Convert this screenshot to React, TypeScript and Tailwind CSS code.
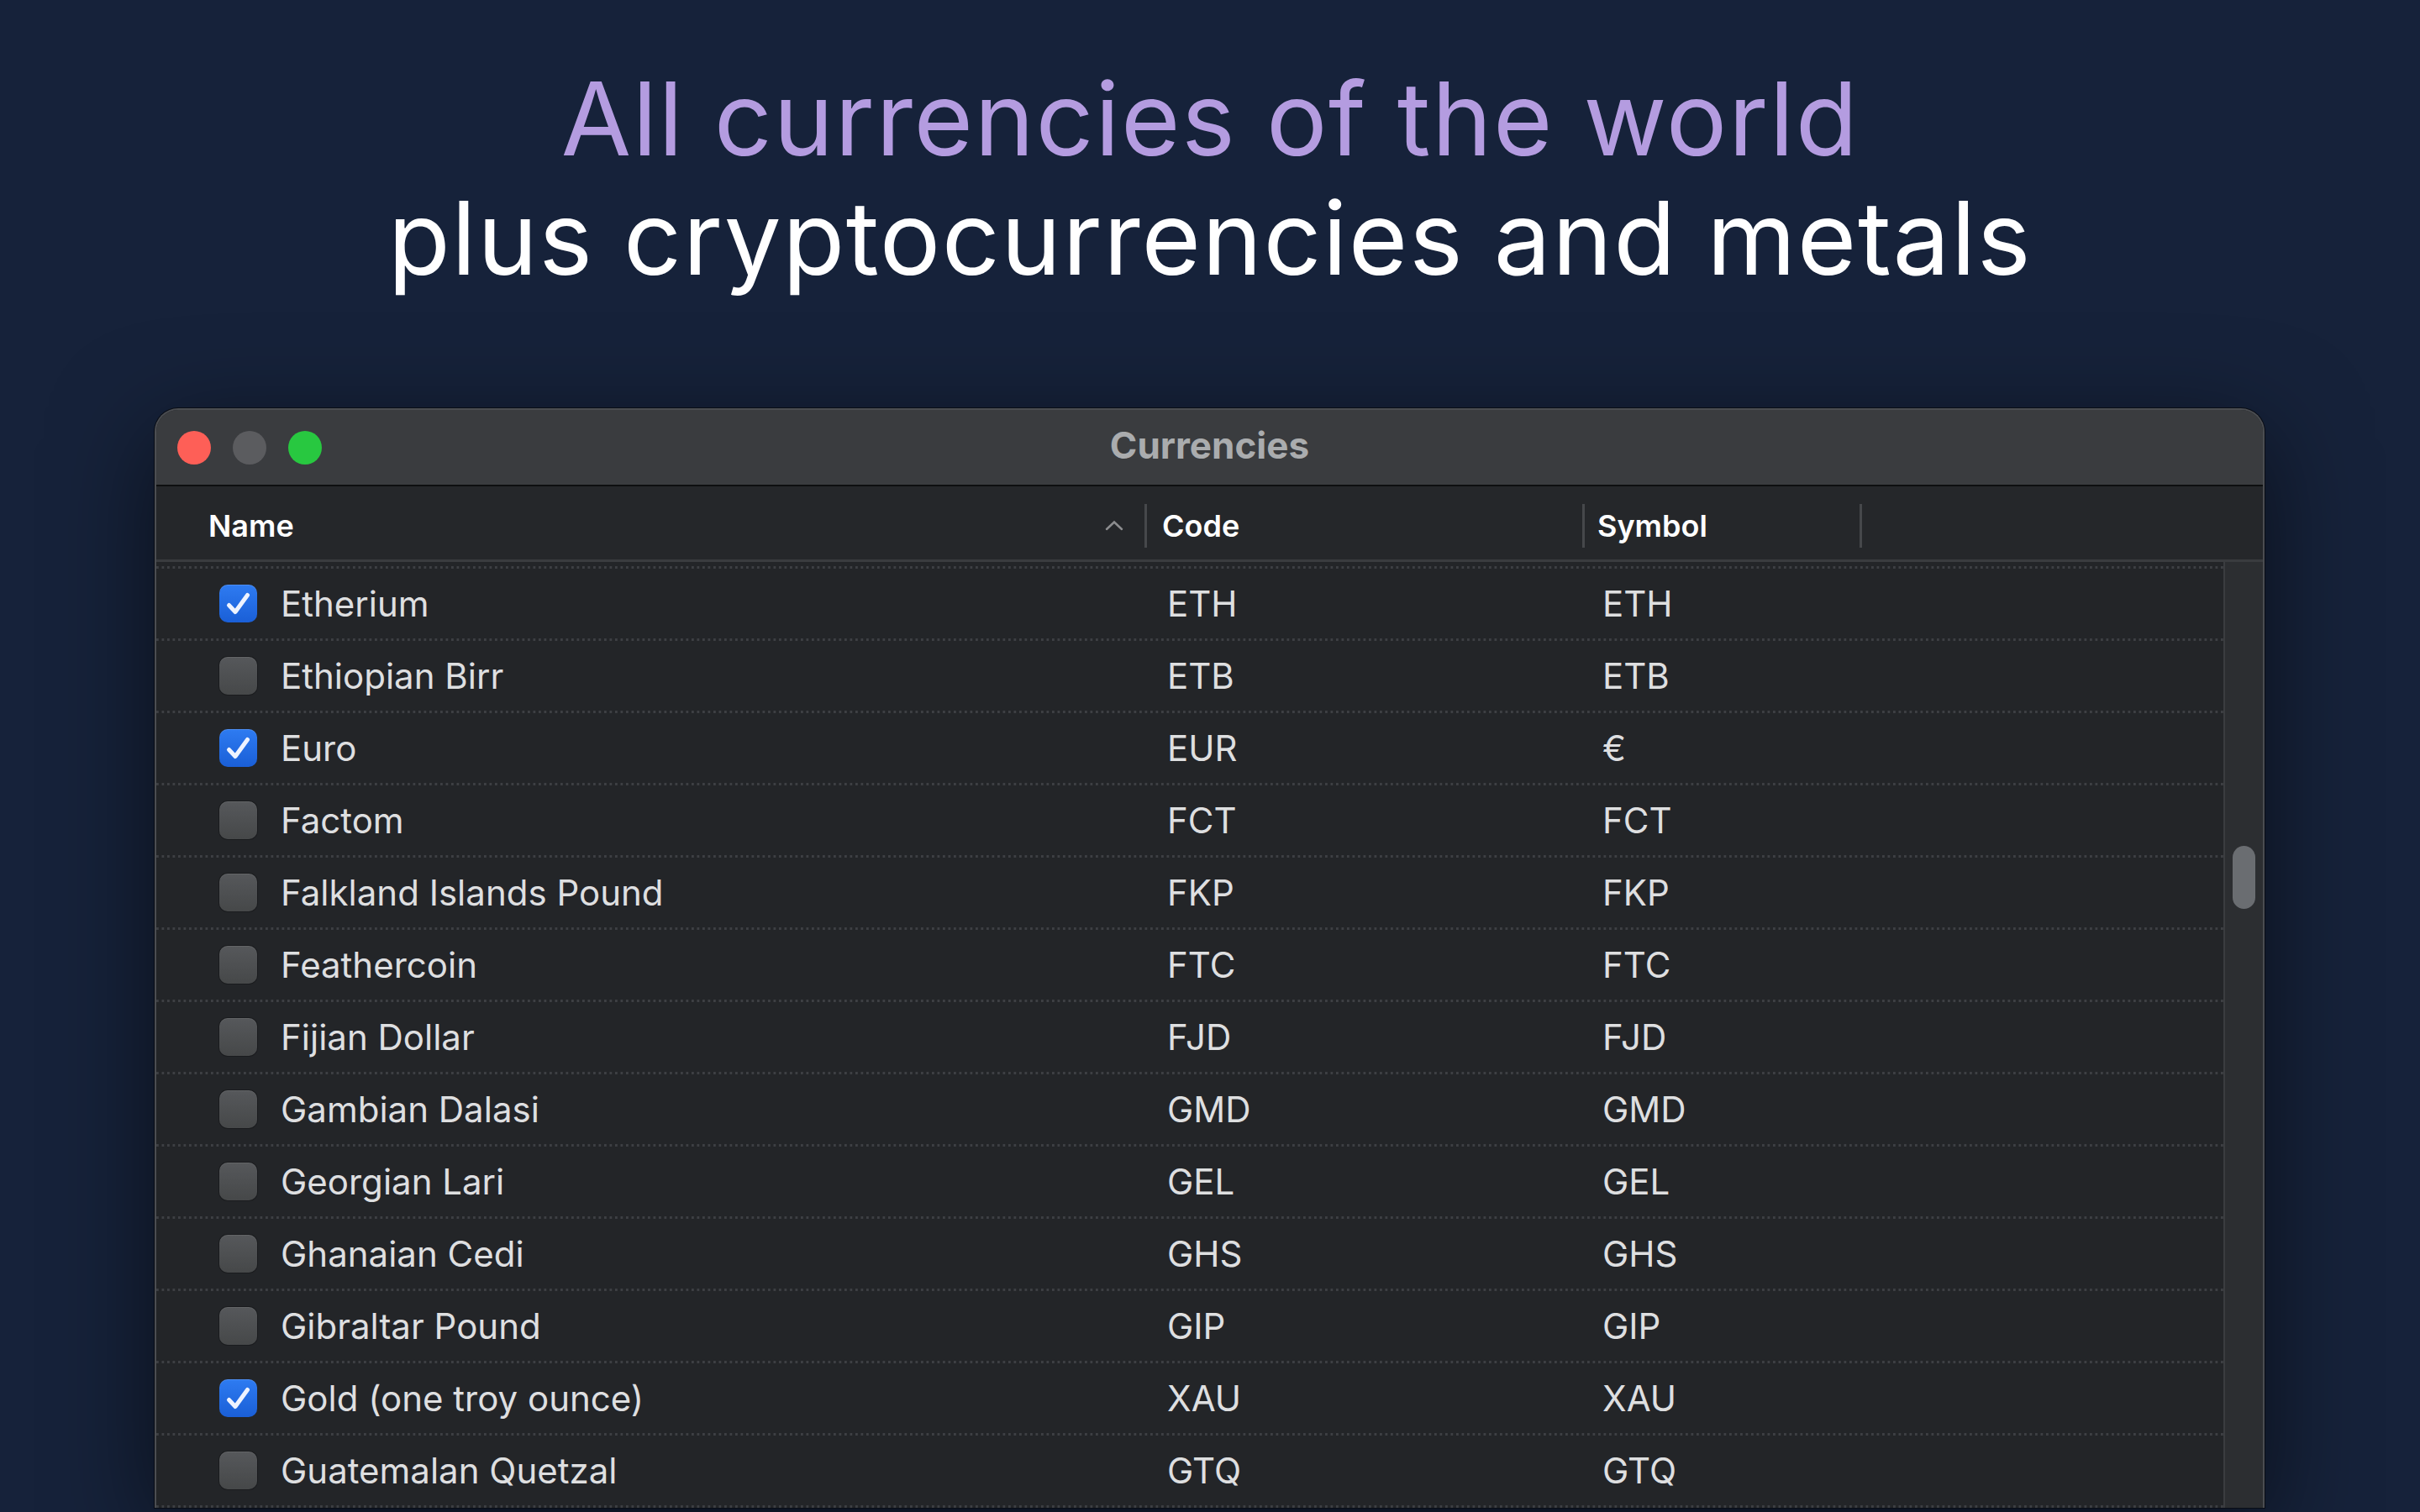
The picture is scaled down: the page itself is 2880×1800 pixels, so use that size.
type Currency = {
  name: string;
  code: string;
  symbol: string;
  enabled: boolean;
};

const CURRENCIES: Currency[] = [
  { name: 'Etherium', code: 'ETH', symbol: 'ETH', enabled: true },
  { name: 'Ethiopian Birr', code: 'ETB', symbol: 'ETB', enabled: false },
  { name: 'Euro', code: 'EUR', symbol: '€', enabled: true },
  { name: 'Factom', code: 'FCT', symbol: 'FCT', enabled: false },
  { name: 'Falkland Islands Pound', code: 'FKP', symbol: 'FKP', enabled: false },
  { name: 'Feathercoin', code: 'FTC', symbol: 'FTC', enabled: false },
  { name: 'Fijian Dollar', code: 'FJD', symbol: 'FJD', enabled: false },
  { name: 'Gambian Dalasi', code: 'GMD', symbol: 'GMD', enabled: false },
  { name: 'Georgian Lari', code: 'GEL', symbol: 'GEL', enabled: false },
  { name: 'Ghanaian Cedi', code: 'GHS', symbol: 'GHS', enabled: false },
  { name: 'Gibraltar Pound', code: 'GIP', symbol: 'GIP', enabled: false },
  { name: 'Gold (one troy ounce)', code: 'XAU', symbol: 'XAU', enabled: true },
  { name: 'Guatemalan Quetzal', code: 'GTQ', symbol: 'GTQ', enabled: false },
];

function Checkbox({ checked }: { checked: boolean }) {
  if (checked) {
    return (
      <span className="flex h-[45px] w-[45px] shrink-0 items-center justify-center rounded-[10px] bg-[linear-gradient(#2e7bf1,#1a5fd7)] shadow-[inset_0_1px_0_rgba(255,255,255,0.15)]">
        <svg width="45" height="45" viewBox="0 0 45 45" fill="none">
          <path
            d="M11.5 24.5 L19 32.5 L33.5 12.5"
            stroke="#eef3ff"
            strokeWidth="5"
            strokeLinecap="round"
            strokeLinejoin="round"
          />
        </svg>
      </span>
    );
  }
  return (
    <span className="h-[45px] w-[45px] shrink-0 rounded-[10px] bg-[linear-gradient(#56585b,#464849)] shadow-[inset_0_1px_0_rgba(255,255,255,0.08),0_0_0_1px_rgba(0,0,0,0.25)]" />
  );
}

function DottedRule() {
  return (
    <div className="h-[3px] bg-[linear-gradient(to_right,#3d3f43_3px,transparent_3px)] bg-[length:6.5px_3px]" />
  );
}

function HeaderDivider() {
  return <div className="h-[52px] w-[3px] shrink-0 bg-[#46484b]" />;
}

export default function App() {
  return (
    <div className="h-[1800px] w-[2880px] overflow-hidden bg-[#16223a] font-['Inter','Liberation_Sans',sans-serif]">
      {/* Headline */}
      <div className="pt-[70px] text-center text-[121px] leading-[142px] tracking-[1.5px]">
        <div className="text-[#b49ce0]">All currencies of the world</div>
        <div className="text-white">plus cryptocurrencies and metals</div>
      </div>

      {/* Window */}
      <div className="ml-[184px] mt-[132px] w-[2511px] overflow-hidden rounded-t-[28px] border-2 border-b-0 border-[#4b4d51] bg-[#232528] shadow-[0_0_0_1px_#090d16,0_30px_120px_rgba(0,0,0,0.55)]">
        {/* Title bar */}
        <div className="grid h-[91px] grid-cols-[1fr_auto_1fr] items-center border-b-2 border-[#0e0f10] bg-[#3a3c3f]">
          <div className="flex items-center gap-[26px] pl-[25px]">
            <span className="h-[40px] w-[40px] rounded-full bg-[#fe5f57]" />
            <span className="h-[40px] w-[40px] rounded-full bg-[#5b5c5f]" />
            <span className="h-[40px] w-[40px] rounded-full bg-[#28c840]" />
          </div>
          <div className="pb-[5px] text-[44px] font-bold text-[#aaacae]">Currencies</div>
          <div />
        </div>

        {/* Column headers */}
        <div className="flex h-[90px] items-center border-b-[3px] border-[#3a3c3f] bg-[#25272a] pt-[6px] text-[36px] font-semibold text-white">
          <div className="flex w-[1176px] items-center justify-between pl-[62px] pr-[25px]">
            <span>Name</span>
            <svg width="22" height="13" viewBox="0 0 22 13" fill="none">
              <path d="M2 11 L11 2.5 L20 11" stroke="#8c8d8f" strokeWidth="2.5" strokeLinecap="round" />
            </svg>
          </div>
          <HeaderDivider />
          <div className="w-[518px] pl-[18px]">Code</div>
          <HeaderDivider />
          <div className="w-[327px] pl-[15px]">Symbol</div>
          <HeaderDivider />
        </div>

        {/* Rows + vertical scroller */}
        <div className="flex">
          <div className="flex-1 pt-[5px]">
            {CURRENCIES.map((c) => (
              <div key={c.code}>
                <DottedRule />
                <div className="flex h-[83px] items-center text-[42px] text-[#dedfe0]">
                  <div className="flex w-[1203px] items-center gap-[28px] pl-[75px]">
                    <Checkbox checked={c.enabled} />
                    <span>{c.name}</span>
                  </div>
                  <div className="w-[518px]">{c.code}</div>
                  <div>{c.symbol}</div>
                </div>
              </div>
            ))}
            <DottedRule />
          </div>
          <div className="flex w-[47px] flex-col items-center border-l-2 border-[#3b3d40] bg-[#2c2e31] pt-[338px]">
            <div className="h-[75px] w-[27px] rounded-full bg-[#6a6d71]" />
          </div>
        </div>
      </div>
    </div>
  );
}
